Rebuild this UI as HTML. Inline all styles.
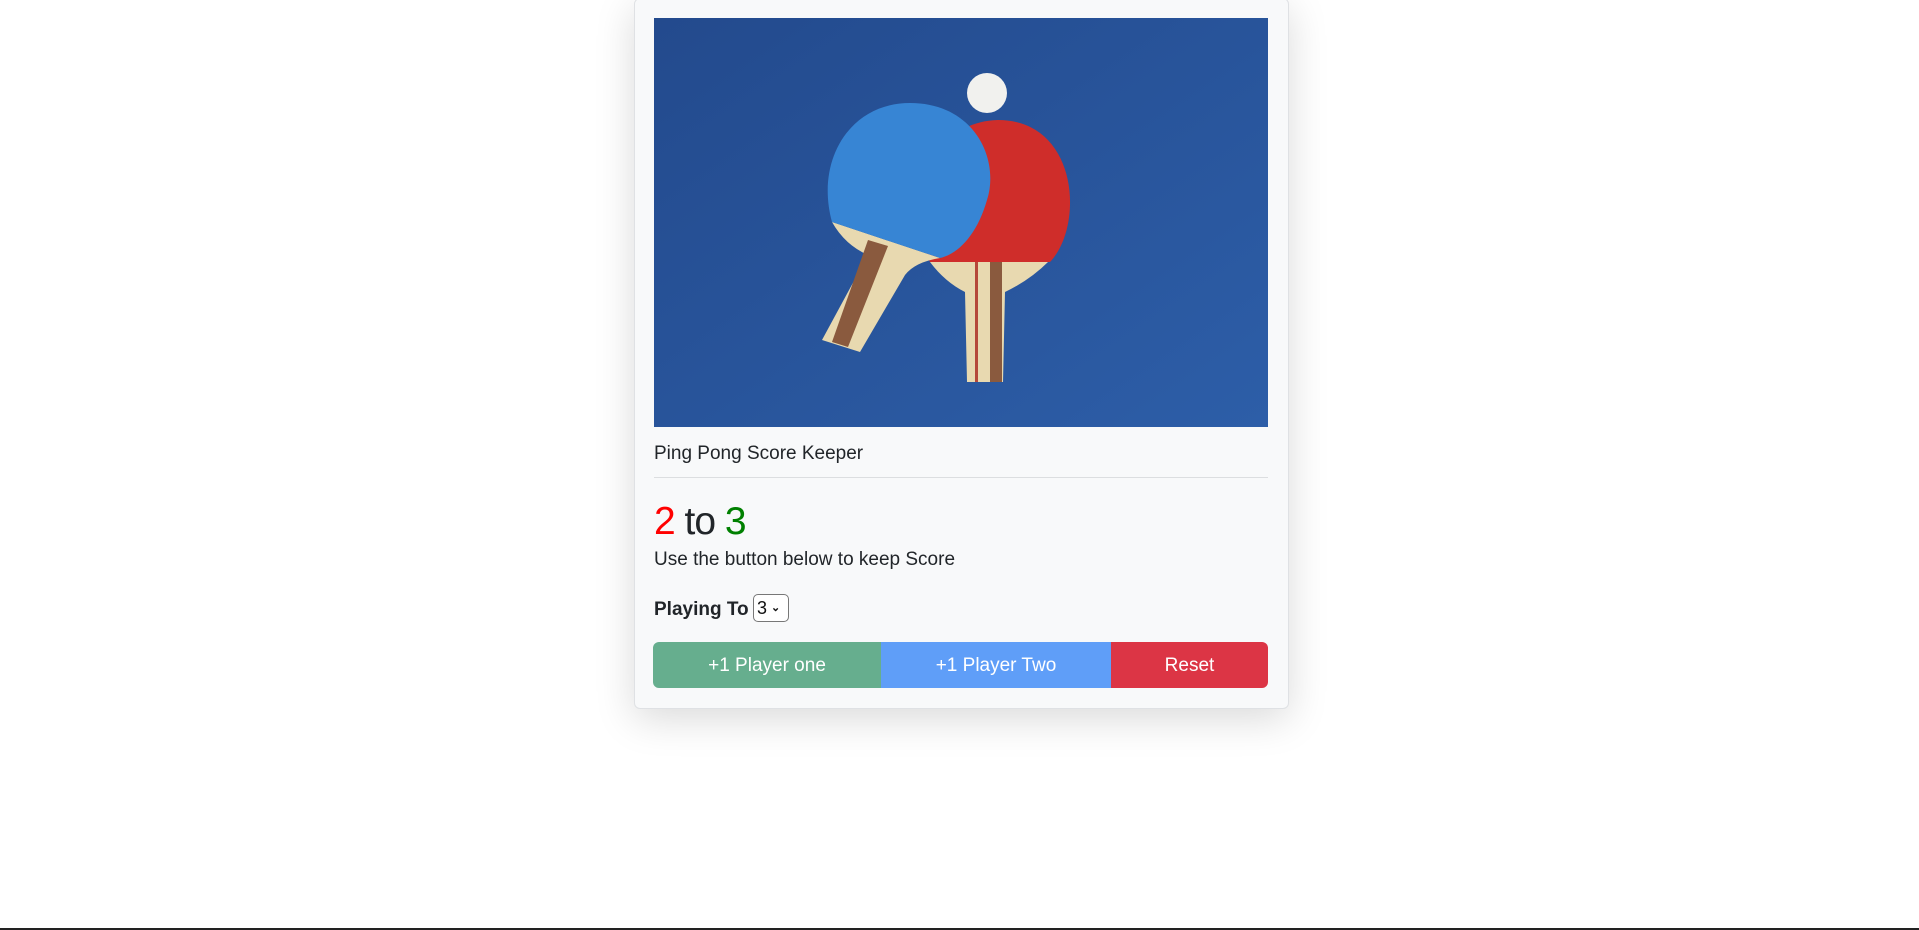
<!DOCTYPE html>
<html><head><meta charset="utf-8"><style>
html,body{margin:0;padding:0;background:#fff;width:1919px;height:930px;overflow:hidden;font-family:"Liberation Sans",sans-serif;}
.card{position:absolute;left:634px;top:-2px;width:653px;height:709px;background:#f8f9fa;border:1px solid #dfe1e4;border-radius:6px;box-shadow:0 10px 40px rgba(0,0,0,0.15);}
svg.img{position:absolute;left:654px;top:18px;width:614px;height:409px;}
.t{position:absolute;left:654px;color:#212529;white-space:nowrap;}
.hr{position:absolute;left:654px;top:477px;width:614px;height:1px;background:#dcdee0;}
.btn{position:absolute;top:642px;height:46px;color:#fff;font-size:19px;display:flex;align-items:center;justify-content:center;padding-top:2px;box-sizing:border-box;}
.bottom{position:absolute;left:0;top:928px;width:1919px;height:2px;background:#222;}
</style></head><body>
<div class="card"></div>
<svg class="img" viewBox="654 18 614 409">
<defs><linearGradient id="bg" x1="0" y1="0" x2="1" y2="1"><stop offset="0" stop-color="#234a8d"/><stop offset="1" stop-color="#2d5ea8"/></linearGradient></defs>
<rect x="654" y="18" width="614" height="409" fill="url(#bg)"/>
<!-- red paddle handle -->
<path d="M930 262 L1048 262 Q1030 280 1005 292 L1003 382 L967 382 L965 292 Q945 282 930 262 Z" fill="#e8d9b0"/>
<rect x="975" y="262" width="3" height="120" fill="#b5483a"/>
<rect x="990" y="262" width="12" height="120" fill="#8a5a3e"/>
<!-- red head -->
<path d="M930 262 C 912 225, 918 122, 998 120 C 1078 120, 1085 225, 1050 262 Z" fill="#cf2d2a"/>
<!-- blue handle -->
<path d="M832 222 L940 258 Q915 262 905 275 L860 352 L822 340 L868 255 Q845 245 832 222 Z" fill="#e8d9b0"/>
<path d="M868 240 L888 246 L848 347 L832 342 Z" fill="#8a5a3e"/>
<!-- blue head -->
<path d="M832 222 C 815 160, 850 103, 910 103 C 975 103, 1000 160, 987 200 C 977 235, 958 254, 940 258 Z" fill="#3785d4"/>
<circle cx="987" cy="93" r="20" fill="#f1f1ee"/>
</svg>
<div class="t" style="top:443px;font-size:19px;">Ping Pong Score Keeper</div>
<div class="hr"></div>
<div class="t" style="top:500px;font-size:39px;letter-spacing:-1px;"><span style="color:#f00">2</span> to <span style="color:#008000">3</span></div>
<div class="t" style="top:549px;font-size:19px;">Use the button below to keep Score</div>
<div class="t" style="top:599px;font-size:19px;font-weight:bold;">Playing To</div>
<div style="position:absolute;left:753px;top:594px;width:36px;height:28px;border:1px solid #777;border-radius:5px;background:#fff;font-size:18px;box-sizing:border-box;padding:3px 0 0 3px;color:#111;">3<span style="font-size:11px;font-weight:bold;margin-left:4px;position:relative;top:-3px;">&#8964;</span></div>
<div class="btn" style="left:653px;width:228px;background:#66ae8e;border-radius:6px 0 0 6px;">+1 Player one</div>
<div class="btn" style="left:881px;width:230px;background:#5f9ef8;">+1 Player Two</div>
<div class="btn" style="left:1111px;width:157px;background:#dc3545;border-radius:0 6px 6px 0;">Reset</div>
<div class="bottom"></div>
</body></html>
